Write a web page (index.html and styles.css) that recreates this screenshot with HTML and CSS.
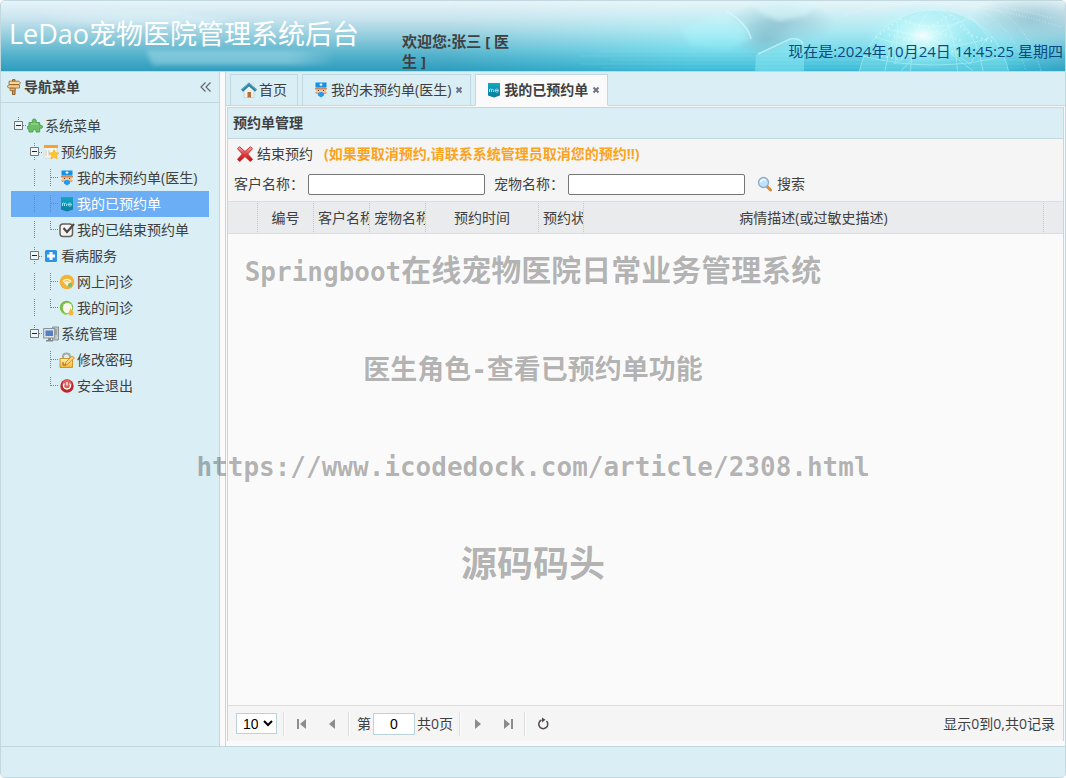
FILE: index.html
```html
<!DOCTYPE html>
<html lang="zh-CN">
<head>
<meta charset="utf-8">
<title>LeDao宠物医院管理系统后台</title>
<link rel="stylesheet" href="styles.css">
</head>
<body>
<svg class="symbols" aria-hidden="true">
  <defs>
    <linearGradient id="g-red" x1="0" y1="0" x2="0" y2="1"><stop offset="0" stop-color="#f8b0b0"/><stop offset=".45" stop-color="#e04848"/><stop offset="1" stop-color="#c40808"/></linearGradient>
    <linearGradient id="g-teal" x1="0" y1="0" x2="0" y2="1"><stop offset="0" stop-color="#12a9c4"/><stop offset="1" stop-color="#067d9b"/></linearGradient>
    <linearGradient id="g-gold" x1="0" y1="0" x2="0" y2="1"><stop offset="0" stop-color="#fff3b8"/><stop offset="1" stop-color="#f0b52e"/></linearGradient>
    <symbol id="sign" viewBox="0 0 16 16"><path d="M6.500 .7h2.500V15.500H6.500z" fill="#d8a55e" stroke="#8c5a26"/><path d="M3 2.200h10l1.500 1.600L13 5.500H3zM1 7.500L3 5.800h10.500V9H3z" fill="#f6d29b" stroke="#9a642a" stroke-width=".8"/><path d="M4 9.200h5v2.500H4z" fill="#e6b472" stroke="#9a642a" stroke-width=".7"/></symbol>
    <symbol id="puzzle" viewBox="0 0 16 16"><path d="M2 4.500h3.700C4.500 2.500 5.500 1 7.200 1s2.800 1.500 1.500 3.500h4V7.500c2-.8 2.800.2 2.800 1.300s-.8 2-2.800 1.200V14H9c.5-1.500-.2-2.300-1.500-2.300S5.500 12.500 6 14H2v-3c-1.500.5-1.700-.5-1.700-1.500S.7 7.800 2 8.200z" fill="#6fbd69" stroke="#4ba552"/><path d="M4 6h7" stroke="#a5df96"/></symbol>
    <symbol id="service" viewBox="0 0 16 16"><path d="M1 2h13v12H1z" fill="#f8f8f2" stroke="#d9ddd7"/><path d="M1 1h14v3H1z" fill="#f5a32b"/><path d="M3 6v6M6 6v6" stroke="#dcdeda" stroke-width="2"/><path d="M11 5.500l1.500 3 3.500.5-2.500 2.500.7 3.500-3.200-1.700L7.800 15l.7-3.500L6 9l3.500-.5z" fill="#ffc32b" stroke="#f4ad22" stroke-width=".5"/></symbol>
    <symbol id="doctor" viewBox="0 0 16 16"><path d="M3 5h10v5l-2 2H5l-2-2z" fill="#f5c49a"/><path d="M2.500 .5h11v5h-11z" fill="#1490e6"/><path d="M8 1.200v3M6.500 2.700h3" stroke="#fff"/><path d="M2 6h12v1.500H2z" fill="#c98a5e"/><path d="M5 8h1v1H5zM10 8h1v1h-1z" fill="#604030"/><path d="M5 11q3-2 6 0v2.500L8 15.500l-3-2z" fill="#249bee"/><path d="M1.500 10.500h3v2zM11.500 10.500h3l-3 2z" fill="#dc8a4d"/></symbol>
    <symbol id="me" viewBox="0 0 16 16"><path d="M2 1h12v12.500L8 15.500l-6-2z" fill="url(#g-teal)"/><path d="M3.500 10V7v3M3.500 7.500c1-1 2-.8 2 .5v2-2c1-1.200 2-.8 2 .5V10M9 8.500h3.500C12.500 6.700 9 6.400 9 8.500s2.500 1.800 3.500 1" fill="none" stroke="#a9dfea" stroke-width=".9"/></symbol>
    <symbol id="check" viewBox="0 0 16 16"><rect x="1" y="2" width="12.500" height="12.500" rx="3" fill="#f5f5f3" stroke="#65605d" stroke-width="1.500"/><path d="M4.500 6l3.500 4L15 2" fill="none" stroke="#504c49" stroke-width="2.200"/></symbol>
    <symbol id="plus" viewBox="0 0 16 16"><rect x="2" y="2" width="12" height="12" rx="1.500" fill="#2c94e8"/><path d="M8 4v8M4 8h8" stroke="#fff" stroke-width="3"/></symbol>
    <symbol id="online" viewBox="0 0 16 16"><circle cx="8" cy="8" r="7.300" fill="#f2b337"/><path d="M3.500 7c2.500-3 6.500-3 9 0L8 12z" fill="#fff3cd"/><path d="M5.500 7.500q2.500-2 5 0" fill="none" stroke="#f2b337"/><circle cx="11" cy="11" r="2" fill="#66bf8f"/></symbol>
    <symbol id="chat" viewBox="0 0 16 16"><circle cx="7.500" cy="7.500" r="6.700" fill="#7cbe45"/><ellipse cx="8.500" cy="8" rx="4.700" ry="5.200" fill="#f9faee"/><path d="M2 12l4 1 3 1-3 1z" fill="#98cc66"/><path d="M11.500 8c1.500 2.500 3 3.500 3 5a2.500 2.500 0 0 1-5 0c0-1.500 1.500-2.500 2-5z" fill="#f4b53b"/></symbol>
    <symbol id="computer" viewBox="0 0 16 16"><path d="M9.500 1h6v13h-6z" fill="#c5cbcd" stroke="#8a9295"/><path d="M11 4h3M11 6h3M11 8h3" stroke="#737d80"/><rect x=".7" y="2.500" width="11" height="9.500" fill="#dce2e5" stroke="#87939b"/><path d="M2.500 4.500h7.500v5.500H2.500z" fill="#557fc2"/><path d="M5 12h3v2h2v1.500H3v-1.500h2z" fill="#7f8b91"/></symbol>
    <symbol id="lock" viewBox="0 0 16 16"><path d="M4 8V4.500C4 .5 11 .5 11 4.500V7" fill="none" stroke="#a7a9a4" stroke-width="2"/><path d="M1 6.500h12.500v9H1z" fill="url(#g-gold)" stroke="#cf962e"/><path d="M6 13l1-3 6-6 2.500 2-6.500 6z" fill="#ffd36a" stroke="#c9822e" stroke-width=".8"/><path d="M4 10v3h3" fill="none" stroke="#9c632b"/></symbol>
    <symbol id="power" viewBox="0 0 16 16"><circle cx="8" cy="8" r="6.700" fill="#bf2528"/><circle cx="8" cy="6.500" r="4.800" fill="#de605d"/><path d="M5.500 5.500c-2 2-1 5.500 2.500 5.500s4.500-3.500 2.500-5.500M8 4v3.500" fill="none" stroke="#fff" stroke-width="1.300"/></symbol>
    <symbol id="home" viewBox="0 0 16 16"><path d="M11 1h2v4h-2z" fill="#eee" stroke="#ccc" stroke-width=".5"/><path d="M3 7l5-4 5 4v8.500H3z" fill="#f0f1ef" stroke="#c0c4c3" stroke-width=".6"/><path d="M6.500 10h3.500v5.500H6.500z" fill="#b87035"/><path d="M1 8.700L8 2.500l7 6.200" fill="none" stroke="#2b83a2" stroke-width="3"/><path d="M1 7.500L8 1.500l7 6" fill="none" stroke="#53b2c8"/></symbol>
    <symbol id="cross" viewBox="0 0 16 16"><path d="M2.500.7L8 5.500 13.500.7l2 2L10.700 8l4.800 5.300-2.200 2.200L8 10.500l-5.300 5-2.200-2.200L5.300 8 .5 2.700z" fill="url(#g-red)" stroke="#bd2222" stroke-width=".9" stroke-linejoin="round"/></symbol>
    <symbol id="search" viewBox="0 0 16 16"><path d="M9.500 10l4 4" stroke="#d98b38" stroke-width="3" stroke-linecap="round"/><circle cx="6.500" cy="6.500" r="5" fill="#bde2fb" stroke="#96aac6" stroke-width="1.300"/><path d="M3.500 6c.5-2 3-3 5-2" stroke="#fff" stroke-width="1.500" fill="none"/></symbol>
    <symbol id="collapse" viewBox="0 0 16 16"><path d="M7.500 3.500L3 8l4.500 4.500M12.500 3.500L8 8l4.500 4.500" fill="none" stroke="#626a6d" stroke-width="1.200"/></symbol>
    <symbol id="close" viewBox="0 0 8 8"><path d="M1.500 1.500l5 5M6.500 1.500l-5 5" stroke="#6c7485" stroke-width="2"/></symbol>
    <symbol id="first" viewBox="0 0 16 16"><path d="M4 3v10" stroke="#8c8c8c" stroke-width="2"/><path d="M12 3v10L6 8z" fill="#8c8c8c"/></symbol>
    <symbol id="prev" viewBox="0 0 16 16"><path d="M11 3v10L5 8z" fill="#8c8c8c"/></symbol>
    <symbol id="next" viewBox="0 0 16 16"><path d="M5 3v10l6-5z" fill="#8c8c8c"/></symbol>
    <symbol id="last" viewBox="0 0 16 16"><path d="M4 3v10l6-5z" fill="#8c8c8c"/><path d="M12 3v10" stroke="#8c8c8c" stroke-width="2"/></symbol>
    <symbol id="reload" viewBox="0 0 16 16"><path d="M11.500 5A4.500 4.500 0 1 1 6.500 4" fill="none" stroke="#514c4a" stroke-width="1.500"/><path d="M7 1.500v5l3.500-2.700z" fill="#514c4a"/></symbol>
    <symbol id="minus" viewBox="0 0 16 18"><path d="M7.500 0v18M12 9.500h4" stroke="#7b8587" stroke-dasharray="1 1"/><path d="M3.500 4.500h8v8h-8z" fill="#eef6f9" stroke="#777"/><path d="M5 8.500h5" stroke="#222"/></symbol>
    <symbol id="minus-root" viewBox="0 0 16 18"><path d="M7.500 0v5M12 8.500h4" stroke="#7b8587" stroke-dasharray="1 1"/><path d="M3.500 4.500h8v8h-8z" fill="#eef6f9" stroke="#777"/><path d="M5 8.500h5" stroke="#222"/></symbol>
    <symbol id="line" viewBox="0 0 16 18"><path d="M7.500 0v18" stroke="#7b8587" stroke-dasharray="1 1"/></symbol>
    <symbol id="join" viewBox="0 0 16 18"><path d="M7.500 0v18M8 8.500h8" fill="none" stroke="#7b8587" stroke-dasharray="1 1"/></symbol>
    <symbol id="join-end" viewBox="0 0 16 18"><path d="M7.500 0v9M8 8.500h8" fill="none" stroke="#7b8587" stroke-dasharray="1 1"/></symbol>
  </defs>
</svg>

<div class="app">
  <header class="banner">
    <svg class="banner-art" viewBox="0 0 1064 70" preserveAspectRatio="none" aria-hidden="true">
      <defs>
        <linearGradient id="sky" x1="0" y1="0" x2="0" y2="1"><stop offset="0" stop-color="#e9f4fa"/><stop offset=".25" stop-color="#c9e4ee"/><stop offset=".5" stop-color="#93cddd"/><stop offset=".75" stop-color="#57b4cd"/><stop offset="1" stop-color="#2d9cbd"/></linearGradient>
        <linearGradient id="aqua" x1="0" y1="0" x2="0" y2="1"><stop offset="0" stop-color="#e8f4f8"/><stop offset=".4" stop-color="#b0e9f2"/><stop offset=".7" stop-color="#78dbeb"/><stop offset="1" stop-color="#38b9d5"/></linearGradient>
        <linearGradient id="fade"><stop offset="0" stop-color="#000"/><stop offset=".4" stop-color="#fff"/><stop offset=".9" stop-color="#fff"/><stop offset="1" stop-color="#333"/></linearGradient>
        <radialGradient id="glow"><stop offset="0" stop-color="#fff"/><stop offset=".3" stop-color="#d9ffff" stop-opacity=".75"/><stop offset="1" stop-color="#a4f5fb" stop-opacity="0"/></radialGradient>
        <radialGradient id="dusk"><stop offset="0" stop-color="#7fb3c2" stop-opacity=".6"/><stop offset="1" stop-color="#7fb3c2" stop-opacity="0"/></radialGradient>
        <linearGradient id="smear" x1="0" y1="0" x2="1" y2="0"><stop offset="0" stop-color="#fff" stop-opacity="0"/><stop offset=".3" stop-color="#e8f8fa" stop-opacity=".3"/><stop offset=".85" stop-color="#e8f8fa" stop-opacity=".3"/><stop offset="1" stop-color="#fff" stop-opacity="0"/></linearGradient>
        <linearGradient id="hex" x1="0" y1="0" x2="0" y2="1"><stop offset="0" stop-color="#d2f5f9" stop-opacity=".5"/><stop offset=".6" stop-color="#a5f1f9" stop-opacity=".7"/><stop offset="1" stop-color="#8ceaf5" stop-opacity=".3"/></linearGradient>
        <filter id="soft" x="-20%" y="-20%" width="140%" height="140%"><feGaussianBlur stdDeviation="2"/></filter>
        <mask id="right"><rect x="440" width="624" height="70" fill="url(#fade)"/></mask>
      </defs>
      <rect width="1064" height="70" fill="url(#sky)"/>
      <rect x="440" width="624" height="70" fill="url(#aqua)" mask="url(#right)"/>
      <g filter="url(#soft)"><path d="M30 9h140l60 10-20 5H60zM145 50h185l4 14H152z" fill="url(#smear)"/></g>
      <ellipse cx="780" cy="22" rx="55" ry="22" fill="url(#dusk)"/>
      <ellipse cx="765" cy="38" rx="30" ry="22" fill="url(#dusk)"/>
      <ellipse cx="1030" cy="18" rx="60" ry="24" fill="url(#dusk)"/>
      <g filter="url(#soft)"><path d="M680 28l42-17 22 13 6 13-23 13-37-5z" fill="url(#hex)"/><path d="M750 0h68l-12 14-28 6-18-8z" fill="#d9f7fb" opacity=".6"/></g>
      <path d="M755 54l33-15q12-2 15 5v26h-49z" fill="#8ce9f3" opacity=".5"/>
      <path d="M725 10q22 13 25 28M757 53l32-15q11-1 13 5" fill="none" stroke="#dffaff" stroke-width="1.500" opacity=".6"/>
      <circle cx="933" cy="85" r="76" fill="#86e4ee" opacity=".35"/>
      <g fill="none" stroke="#dbffff" opacity=".4">
        <circle cx="933" cy="85" r="76"/><ellipse cx="933" cy="85" rx="24" ry="76"/><ellipse cx="933" cy="85" rx="50" ry="76"/>
        <path d="M896 18q37 15 74 0M874 36q59 20 118 0M862 55q70 18 142 0M885 28l45 9 39-22 18 20-18 28-39-26-36 26 3-43M930 37l-30 33M930 37l42 33"/>
      </g>
      <g fill="none" stroke="#e7ffff" stroke-width="2" stroke-dasharray="1 4" opacity=".75"><path d="M875 36l24-18 28 9 22-13 20 20 24 7M888 34l25 6 20-10 28 10M866 52l30 6 32-15 40 12"/></g>
      <ellipse cx="922" cy="35" rx="58" ry="34" fill="url(#glow)" opacity=".9"/>
      <g fill="none" stroke="#f1ffff" stroke-dasharray="1 2" opacity=".5"><path d="M835 18q90-35 225 8M845 13q90-28 205 4M965 5q45 12 60 65M980 3q45 12 60 67"/></g>
      <g stroke="#c9f7fb" opacity=".12"><path d="M600 51h420M580 55h450M610 59h420M580 63h440M600 67h420"/></g>
    </svg>
    <h1 class="banner-title">LeDao宠物医院管理系统后台</h1>
    <p class="welcome">欢迎您:张三 [ 医生 ]</p>
    <time class="clock">现在是:2024年10月24日 14:45:25 星期四</time>
  </header>

  <div class="body">
    <aside class="sidebar">
      <div class="side-head">
        <svg class="icon"><use href="#sign"/></svg><h2>导航菜单</h2>
        <button class="plain collapse" aria-label="折叠"><svg class="icon"><use href="#collapse"/></svg></button>
      </div>
      <nav class="tree">
        <a class="node" href="#"><svg class="twig"><use href="#minus-root"/></svg><svg class="icon"><use href="#puzzle"/></svg><span>系统菜单</span></a>
        <a class="node" href="#"><i class="twig"></i><svg class="twig"><use href="#minus"/></svg><svg class="icon"><use href="#service"/></svg><span>预约服务</span></a>
        <a class="node" href="#"><i class="twig"></i><svg class="twig"><use href="#line"/></svg><svg class="twig"><use href="#join"/></svg><svg class="icon"><use href="#doctor"/></svg><span>我的未预约单(医生)</span></a>
        <a class="node selected" href="#"><i class="twig"></i><svg class="twig"><use href="#line"/></svg><svg class="twig"><use href="#join"/></svg><svg class="icon"><use href="#me"/></svg><span>我的已预约单</span></a>
        <a class="node" href="#"><i class="twig"></i><svg class="twig"><use href="#line"/></svg><svg class="twig"><use href="#join-end"/></svg><svg class="icon"><use href="#check"/></svg><span>我的已结束预约单</span></a>
        <a class="node" href="#"><i class="twig"></i><svg class="twig"><use href="#minus"/></svg><svg class="icon"><use href="#plus"/></svg><span>看病服务</span></a>
        <a class="node" href="#"><i class="twig"></i><svg class="twig"><use href="#line"/></svg><svg class="twig"><use href="#join"/></svg><svg class="icon"><use href="#online"/></svg><span>网上问诊</span></a>
        <a class="node" href="#"><i class="twig"></i><svg class="twig"><use href="#line"/></svg><svg class="twig"><use href="#join-end"/></svg><svg class="icon"><use href="#chat"/></svg><span>我的问诊</span></a>
        <a class="node" href="#"><i class="twig"></i><svg class="twig"><use href="#minus-root"/></svg><svg class="icon"><use href="#computer"/></svg><span>系统管理</span></a>
        <a class="node" href="#"><i class="twig"></i><i class="twig"></i><svg class="twig"><use href="#join"/></svg><svg class="icon"><use href="#lock"/></svg><span>修改密码</span></a>
        <a class="node" href="#"><i class="twig"></i><i class="twig"></i><svg class="twig"><use href="#join-end"/></svg><svg class="icon"><use href="#power"/></svg><span>安全退出</span></a>
      </nav>
    </aside>

    <main class="main">
      <div class="tabs">
        <div class="tab"><button class="plain tab-label"><svg class="icon"><use href="#home"/></svg><span>首页</span></button></div>
        <div class="tab"><button class="plain tab-label"><svg class="icon"><use href="#doctor"/></svg><span>我的未预约单(医生)</span></button><button class="plain" aria-label="关闭"><svg class="close"><use href="#close"/></svg></button></div>
        <div class="tab active"><button class="plain tab-label"><svg class="icon"><use href="#me"/></svg><span>我的已预约单</span></button><button class="plain" aria-label="关闭"><svg class="close"><use href="#close"/></svg></button></div>
      </div>
      <section class="panel">
        <h2 class="panel-title">预约单管理</h2>
        <div class="toolbar">
          <div class="tool-row">
            <button class="plain tool"><svg class="icon"><use href="#cross"/></svg><span>结束预约</span></button>
            <strong class="notice">(如果要取消预约,请联系系统管理员取消您的预约!!)</strong>
          </div>
          <div class="tool-row">
            <label for="customer">客户名称：</label><input class="field" id="customer" type="text">
            <label for="pet">宠物名称：</label><input class="field" id="pet" type="text">
            <button class="plain tool"><svg class="icon"><use href="#search"/></svg><span>搜索</span></button>
          </div>
        </div>
        <div class="grid">
          <table>
            <colgroup><col class="c-check"><col class="c-name"><col class="c-name"><col class="c-name"><col class="c-time"><col class="c-state"><col><col class="c-scroll"></colgroup>
            <thead><tr><th></th><th>编号</th><th>客户名称</th><th>宠物名称</th><th>预约时间</th><th>预约状态</th><th>病情描述(或过敏史描述)</th><th></th></tr></thead>
          </table>
        </div>
        <div class="pager">
          <select class="size" aria-label="每页条数"><option>10</option></select>
          <span class="sep"></span>
          <button class="plain page-btn" aria-label="首页"><svg class="icon"><use href="#first"/></svg></button>
          <button class="plain page-btn" aria-label="上一页"><svg class="icon"><use href="#prev"/></svg></button>
          <span class="sep"></span>
          <label for="page">第</label><input class="page-no" id="page" type="text" value="0"><span>共0页</span>
          <span class="sep"></span>
          <button class="plain page-btn" aria-label="下一页"><svg class="icon"><use href="#next"/></svg></button>
          <button class="plain page-btn" aria-label="末页"><svg class="icon"><use href="#last"/></svg></button>
          <span class="sep"></span>
          <button class="plain page-btn" aria-label="刷新"><svg class="icon"><use href="#reload"/></svg></button>
          <span class="summary">显示0到0,共0记录</span>
        </div>
      </section>
    </main>
  </div>
  <footer class="footer"></footer>

  <div class="watermark">
    <p><span class="latin">Springboot</span><span class="mark-lg">在线宠物医院日常业务管理系统</span></p>
    <p>医生角色<span class="latin">-</span>查看已预约单功能</p>
    <p class="latin">https://www.icodedock.com/article/2308.html</p>
    <p class="mark-xl">源码码头</p>
  </div>
</div>
</body>
</html>
```

FILE: styles.css
```css
* { box-sizing: border-box; }
body {
  margin: 0;
  background: #fafafa;
  color: #404040;
  font: 14px/20px "Open Sans", "Noto Sans CJK SC", sans-serif;
}
h1, h2, p { margin: 0; font-size: inherit; }
a { color: inherit; text-decoration: none; }
.symbols { position: absolute; width: 0; height: 0; }
.icon { width: 16px; height: 16px; flex: none; display: block; }
.plain { display: flex; align-items: center; padding: 0; border: 0; background: none; color: inherit; font: inherit; cursor: pointer; white-space: nowrap; }

.app { position: relative; display: flex; flex-direction: column; min-height: 100vh; border: 1px solid #c0d8de; border-radius: 5px; overflow: hidden; }

.banner { position: relative; display: flex; align-items: flex-start; height: 70px; flex: none; }
.banner > * { position: relative; }
.banner .banner-art { position: absolute; inset: 0; width: 100%; height: 100%; }
.banner-title { padding: 13px 0 0 8px; width: 401px; color: #fff; font-size: 27px; line-height: 40px; font-weight: 400; white-space: nowrap; }
.welcome { width: 120px; padding-top: 30px; font-size: 15px; font-weight: 700; }
.clock { margin: 40px 2px 0 auto; color: #0b4a80; font-size: 15px; white-space: nowrap; }

.body { display: flex; flex: 1; gap: 5px; border-top: 1px solid #c0d8de; }
.sidebar { width: 219px; flex: none; background: #daeef5; border-right: 1px solid #c0d8de; }
.side-head { display: flex; align-items: center; height: 31px; padding: 0 5px; border-bottom: 1px solid #c0d8de; }
.side-head h2 { margin-left: 2px; }
.collapse { margin-left: auto; }
.tree { padding: 10px; }
.node { display: flex; align-items: center; height: 26px; white-space: nowrap; }
.node span { margin-left: 2px; }
.twig { width: 16px; height: 18px; flex: none; }
.selected { background: #6caef5; color: #fff; }

.main { display: flex; flex-direction: column; flex: 1; min-width: 0; border-left: 1px solid #c0d8de; }
.tabs { display: flex; gap: 4px; height: 34px; padding: 2px 4px 0; background: #daeef5; border-bottom: 1px solid #c0d8de; }
.tab { display: flex; gap: 4px; height: 32px; padding: 0 7px 0 10px; border: 1px solid #c0d8de; background: #daeef5; }
.tab:first-child { padding-right: 10px; }
.tab.active { background: #fafafa; border-bottom-color: #fafafa; font-weight: 700; }
.tab-label { gap: 2px; }
.close { width: 8px; height: 8px; }

.panel { display: flex; flex-direction: column; flex: 1; margin: 1px 1px 5px; border: 1px solid #c0d8de; border-bottom: 0; }
.panel-title { height: 31px; padding: 5px; background: #daeef5; border-bottom: 1px solid #c0d8de; }
.toolbar { padding: 0 6px 2px; background: #f5f5f5; }
.tool-row { display: flex; align-items: center; height: 30px; }
.tool { gap: 4px; padding: 0 3px; }
.notice { margin-left: 8px; color: #fba31c; }
.field { width: 177px; height: 21px; margin: 0 9px 0 4px; border: 1px solid #767676; border-radius: 2px; background: #fff; }

.grid { flex: 1; }
table { width: 100%; table-layout: fixed; border-collapse: separate; border-spacing: 0; }
th { height: 33px; padding: 0 4px; background: #e9ebec; border: solid #ddd; border-width: 1px 0; border-right: 1px dotted #c8c8c8; font-weight: 400; white-space: nowrap; overflow: hidden; }
th:last-child { border-right: 0; }
.c-check { width: 30px; }
.c-name { width: 56px; }
.c-time { width: 113px; }
.c-state { width: 45px; }
.c-scroll { width: 19px; }

.pager { display: flex; align-items: center; height: 36px; padding: 0 8px; background: #f5f5f5; border-top: 1px solid #ddd; }
.size { width: 41px; height: 21px; padding: 0 2px; border: 1px solid #b9d3da; background: #fff; color: #000; font: 14px "Liberation Sans", sans-serif; }
.sep { width: 2px; height: 24px; margin: 0 7px 0 6px; border-left: 1px solid #ddd; background: #fff; }
.page-btn { justify-content: center; width: 20px; height: 24px; }
.page-btn + .page-btn { margin-left: 10px; }
.page-no { width: 42px; height: 22px; margin: 0 2px; border: 1px solid #b9d3da; background: #fff; text-align: center; font: 14px "Liberation Sans", sans-serif; }
.summary { margin-left: auto; }
.footer { height: 31px; flex: none; background: #daeef5; border-top: 1px solid #c0d8de; }

.watermark { position: absolute; inset: 249px 0 auto; display: flex; flex-direction: column; gap: 57px; color: rgba(0, 0, 0, .3); font-size: 27px; line-height: 40px; font-weight: 700; text-align: center; white-space: nowrap; pointer-events: none; }
.latin { font-family: "DejaVu Sans Mono", monospace; font-size: 26px; }
.mark-lg { font-size: 30px; }
.mark-xl { font-size: 36px; }
```
